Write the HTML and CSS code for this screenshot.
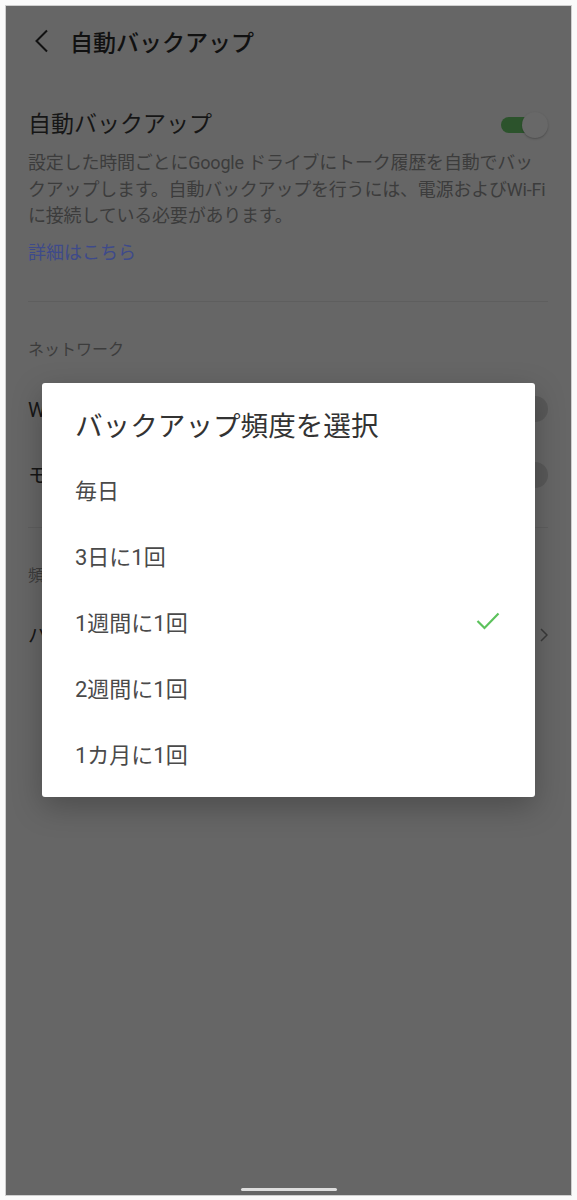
FILE: index.html
```html
<!DOCTYPE html>
<html lang="ja">
<head>
  <meta charset="UTF-8" />
  <meta name="viewport" content="width=device-width, initial-scale=1.0"/>
  <title>自動バックアップ</title>
  <link rel="stylesheet" href="styles.css">
</head>
<body>
  <div class="phone">
    <div class="page">
      <div class="topbar">
        <svg class="back" width="16" height="24" viewBox="0 0 16 24"><path d="M14 1.5 L3.5 12 L14 22.5" fill="none" stroke="#111" stroke-width="2"/></svg>
        <h1>自動バックアップ</h1>
      </div>

      <div class="setting main">
        <div class="row">
          <span class="label big">自動バックアップ</span>
          <span class="toggle on"><i></i></span>
        </div>
        <p class="desc">設定した時間ごとにGoogle ドライブにトーク履歴を自動でバッ<br>クアップします。自動バックアップを行うには、電源およびWi-Fi<br>に接続している必要があります。</p>
        <a class="more">詳細はこちら</a>
      </div>

      <div class="section">
        <div class="section-title">ネットワーク</div>
        <div class="row item">
          <span class="label">Wi-Fi接続時のみ</span>
          <span class="toggle"><i></i></span>
        </div>
        <div class="row item">
          <span class="label">モバイルデータ通信</span>
          <span class="toggle"><i></i></span>
        </div>
      </div>

      <div class="section">
        <div class="section-title">頻度</div>
        <div class="row item">
          <span class="label">バックアップ頻度</span>
          <svg width="8" height="14" viewBox="0 0 8 14"><path d="M1 1 L7 7 L1 13" fill="none" stroke="#3a3a3a" stroke-width="1.5"/></svg>
        </div>
      </div>
    </div>

    <!-- dialog over the dimmed settings -->
    <div class="overlay">
      <div class="dialog">
        <h2>バックアップ頻度を選択</h2>
        <ul class="options">
          <li>毎日</li>
          <li>3日に1回</li>
          <li class="selected">1週間に1回
            <svg width="24" height="18" viewBox="0 0 24 18"><path d="M1.5 9 L8.5 16 L22.5 1.5" fill="none" stroke="#5cc25c" stroke-width="2.2"/></svg>
          </li>
          <li>2週間に1回</li>
          <li>1カ月に1回</li>
        </ul>
      </div>
      <div class="home-bar"></div>
    </div>
  </div>
</body>
</html>
```

FILE: styles.css
```css
body {
  margin: 0;
  background: #fafafa;
  font-family: Roboto, "Noto Sans CJK JP", sans-serif;
}

.phone {
  position: relative;
  margin: 5px 5px 4px 5px;
  height: 1189px;
  border: 1px solid #cfcfcf;
  background: #666;
  overflow: hidden;
}

.page {
  padding: 0 23px 0 22px;
}

.topbar {
  height: 70px;
  display: flex;
  align-items: center;
  gap: 21px;
  padding-left: 5px;
}

.topbar h1 {
  margin: 0;
  font-size: 23px;
  font-weight: 500;
  color: #111;
}

.row {
  display: flex;
  align-items: center;
  justify-content: space-between;
}

.main {
  padding-top: 34px;
  padding-bottom: 36px;
  border-bottom: 1px solid #5e5e5e;
}

.label {
  font-size: 20px;
  color: #161616;
}

.label.big {
  font-size: 23px;
  line-height: 30px;
}

.desc {
  margin: 10px 0 0;
  font-size: 18px;
  line-height: 26.5px;
  color: #3c3c3c;
  letter-spacing: -0.2px;
}

.more {
  display: block;
  margin-top: 11px;
  font-size: 18px;
  line-height: 24px;
  color: #3e4a8a;
}

.toggle {
  position: relative;
  width: 48px;
  height: 26px;
}

.toggle::before {
  content: "";
  position: absolute;
  left: 1px;
  right: 4px;
  top: 5px;
  height: 16px;
  border-radius: 8px;
  background: #606060;
}

.toggle i {
  position: absolute;
  right: 0;
  top: 0;
  width: 26px;
  height: 26px;
  border-radius: 50%;
  background: #595959;
}

.toggle.on::before {
  background: #2c532c;
}

.toggle.on i {
  background: #686868;
  box-shadow: 0 1px 2px rgba(0,0,0,0.25);
}

.section {
  border-bottom: 1px solid #5e5e5e;
}

.section:last-child {
  border-bottom: none;
}

.section-title {
  padding-top: 36px;
  margin-bottom: 14px;
  font-size: 16px;
  line-height: 24px;
  color: #3c3c3c;
}

.item {
  height: 66px;
}

.section .item:last-child {
  margin-bottom: 19px;
}

.overlay {
  position: absolute;
  inset: 0;
  display: flex;
  flex-direction: column;
}

.dialog {
  margin: 377px 36px 0 36px;
  background: #fff;
  border-radius: 3px;
  padding: 26px 35px 11px 33px;
  box-shadow: 0 10px 30px rgba(0,0,0,0.25);
}

.dialog h2 {
  margin: 0 0 11px;
  font-size: 27.6px;
  line-height: 36px;
  font-weight: 400;
  color: #333;
}

.options {
  list-style: none;
  margin: 0;
  padding: 0;
}

.options li {
  height: 66px;
  display: flex;
  align-items: center;
  justify-content: space-between;
  font-size: 22px;
  color: #4a4a4a;
}

.home-bar {
  margin: auto auto 4px;
  width: 96px;
  height: 3px;
  border-radius: 2px;
  background: #ddd;
}
```
